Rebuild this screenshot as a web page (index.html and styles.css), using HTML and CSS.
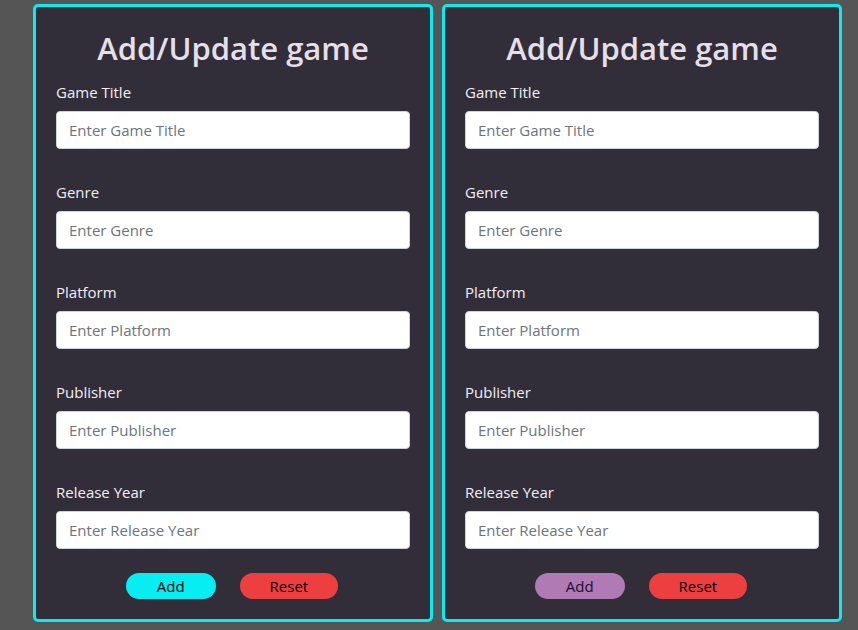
FILE: index.html
```html
<!DOCTYPE html>
<html>
<head>
<meta charset="utf-8">
<link rel="stylesheet" href="styles.css">
</head>
<body>
<div class="page">
  <form class="card">
    <h1 class="title">Add/Update game</h1>
    <div class="group"><label class="label">Game Title</label><input class="field" placeholder="Enter Game Title"></div>
    <div class="group"><label class="label">Genre</label><input class="field" placeholder="Enter Genre"></div>
    <div class="group"><label class="label">Platform</label><input class="field" placeholder="Enter Platform"></div>
    <div class="group"><label class="label">Publisher</label><input class="field" placeholder="Enter Publisher"></div>
    <div class="group last"><label class="label">Release Year</label><input class="field" placeholder="Enter Release Year"></div>
    <div class="actions">
      <button type="button" class="btn btn-add">Add</button>
      <button type="button" class="btn btn-reset">Reset</button>
    </div>
  </form>
  <form class="card">
    <h1 class="title">Add/Update game</h1>
    <div class="group"><label class="label">Game Title</label><input class="field" placeholder="Enter Game Title"></div>
    <div class="group"><label class="label">Genre</label><input class="field" placeholder="Enter Genre"></div>
    <div class="group"><label class="label">Platform</label><input class="field" placeholder="Enter Platform"></div>
    <div class="group"><label class="label">Publisher</label><input class="field" placeholder="Enter Publisher"></div>
    <div class="group last"><label class="label">Release Year</label><input class="field" placeholder="Enter Release Year"></div>
    <div class="actions">
      <button type="button" class="btn btn-update">Add</button>
      <button type="button" class="btn btn-reset">Reset</button>
    </div>
  </form>
</div>
</body>
</html>
```
FILE: styles.css
```css
html, body {
  margin: 0;
  padding: 0;
  background: #555555;
  font-family: "Open Sans", "Noto Sans", sans-serif;
}
.page {
  display: flex;
  gap: 9px;
  padding: 4px 0 0 33px;
}
.card {
  box-sizing: border-box;
  width: 400px;
  height: 618px;
  background: #312e3a;
  border: 3px solid #06eef2;
  border-radius: 5px;
  padding: 0 20px;
  display: flex;
  flex-direction: column;
}
.title {
  margin: 21px 0 12px;
  font-size: 31px;
  line-height: 40px;
  font-weight: 600;
  text-align: center;
  color: #e5dfe8;
}
.group {
  display: flex;
  flex-direction: column;
  margin-bottom: 31px;
}
.group.last {
  margin-bottom: 24px;
}
.label {
  font-size: 15px;
  line-height: 24px;
  color: #f2eff4;
  margin-bottom: 7px;
}
.field {
  box-sizing: border-box;
  height: 38px;
  width: 100%;
  border: 1px solid #ced4da;
  border-radius: 4px;
  padding: 0 12px;
  font-family: inherit;
  font-size: 15px;
  background: #fff;
  color: #495057;
  outline: none;
}
.field::placeholder {
  color: #6c757d;
}
.actions {
  display: flex;
  justify-content: center;
  gap: 24px;
  padding-right: 2px;
}
.btn {
  height: 26px;
  border: none;
  border-radius: 13px;
  padding: 0 30px;
  font-family: inherit;
  font-size: 15px;
  line-height: 26px;
  color: #000;
  cursor: pointer;
}
.btn-add { background: #06eef2; padding: 0 31px; }
.btn-update { background: #b07ab4; color: #1a1030; padding: 0 31px; }
.btn-reset { background: #ee3f40; }
```
